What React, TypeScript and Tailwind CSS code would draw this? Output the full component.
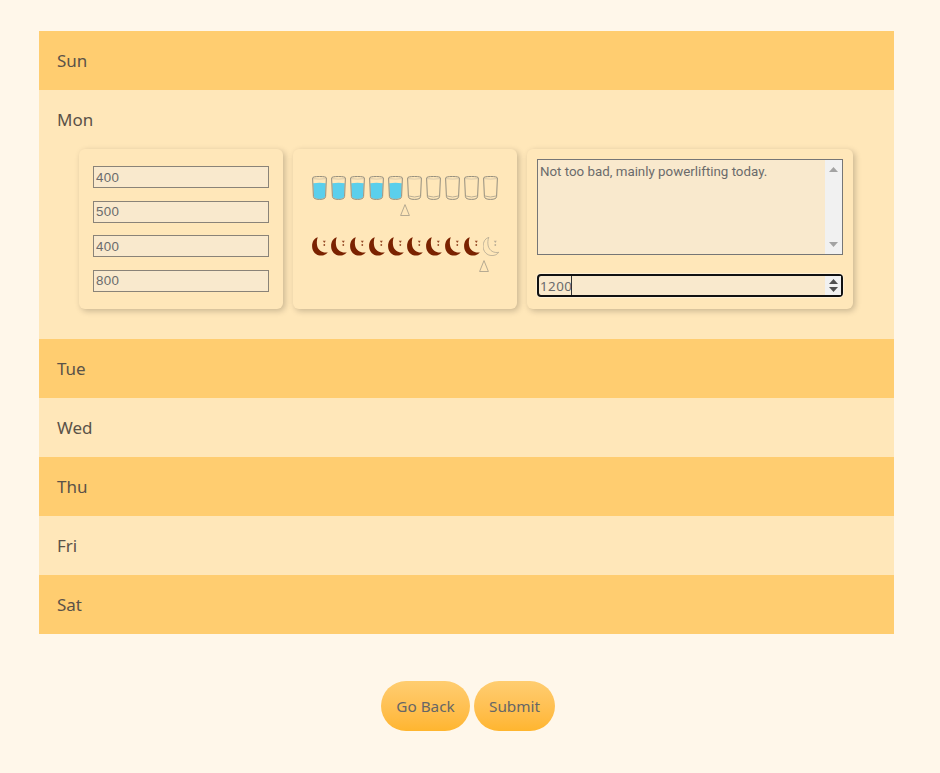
const FONT = "font-['Noto_Sans','Liberation_Sans',sans-serif]";

function Glass({ filled }: { filled: boolean }) {
  return (
    <svg width="15" height="24" viewBox="0 0 15 24" fill="none">
      {filled && (
        <path
          d="M1.2 7.2 Q7.5 6.2 13.8 7.2 L13.1 20.5 Q12.9 22.9 7.5 22.9 Q2.1 22.9 1.9 20.5 Z"
          fill="#5bcfec"
        />
      )}
      <path
        d="M0.6 2 Q0.6 0.5 7.5 0.5 Q14.4 0.5 14.4 2 L13.6 20.5 Q13.4 23.4 7.5 23.4 Q1.6 23.4 1.4 20.5 Z"
        stroke="#948e7e"
        strokeWidth="1"
      />
      <path d="M0.7 2.6 Q7.5 3.6 14.3 2.6" stroke="#b5ad9c" strokeWidth="0.5" />
      {!filled && (
        <path d="M1.8 20 Q7.5 22 13.2 20" stroke="#a89f8c" strokeWidth="0.8" />
      )}
    </svg>
  );
}

function Moon({ filled }: { filled: boolean }) {
  const star = filled ? '#7a2200' : '#a89f8c';
  return (
    <svg width="16" height="19" viewBox="0 0 16 19" fill="none">
      <path
        d="M5.8 0.3 C2 1.5 0.1 5 0.1 9.2 C0.1 14.6 4 18.6 9 18.6 C11.6 18.6 14.2 17.5 15.8 15.3 C11 16.3 6.4 13.8 5.2 9 C4.6 6 4.7 3 5.8 0.3 Z"
        fill={filled ? '#7a2200' : 'none'}
        stroke={filled ? 'none' : '#a89f8c'}
        strokeWidth="0.7"
      />
      <path d="M10.8 3.8 H13.8 L12.3 6 Z" fill={star} opacity="0.8" />
      <circle cx="12.3" cy="8" r="0.9" fill={star} opacity="0.8" />
    </svg>
  );
}

function Marker() {
  return (
    <svg width="10" height="12" viewBox="0 0 10 12" fill="none">
      <path d="M5 0.6 L9.4 11.5 H0.6 Z" stroke="#a39a88" strokeWidth="0.8" />
    </svg>
  );
}

function Row({ label, dark }: { label: string; dark: boolean }) {
  return (
    <div
      className={`h-[59px] flex items-center px-[18px] text-[17px] text-[#5a5248] ${
        dark ? 'bg-[#ffcd70]' : 'bg-[#ffe7b9]'
      }`}
    >
      {label}
    </div>
  );
}

function Field({ value }: { value: string }) {
  return (
    <input
      type="number"
      defaultValue={value}
      className="w-full h-[22px] px-[2px] bg-[#f9e9cd] border border-[#8a8378] text-[13.33px] text-[#6b6b6b] font-['Liberation_Sans',sans-serif] tracking-[0.4px] outline-none"
    />
  );
}

function ArrowUp({ color }: { color: string }) {
  return (
    <svg width="9" height="5" viewBox="0 0 9 5">
      <path d="M4.5 0 L9 5 H0 Z" fill={color} />
    </svg>
  );
}

function ArrowDown({ color }: { color: string }) {
  return (
    <svg width="9" height="5" viewBox="0 0 9 5">
      <path d="M0 0 H9 L4.5 5 Z" fill={color} />
    </svg>
  );
}

export default function App() {
  const glasses = [1, 1, 1, 1, 1, 0, 0, 0, 0, 0];
  const moons = [1, 1, 1, 1, 1, 1, 1, 1, 1, 0];

  return (
    <div className={`min-h-[773px] bg-[#fff7ea] pl-[39px] pr-[46px] pt-[31px] ${FONT}`}>
      <Row label="Sun" dark />

      <div className="bg-[#ffe7b9] pb-[30px]">
        <div className="h-[59px] flex items-center px-[18px] text-[17px] text-[#5a5248]">Mon</div>
        <div className="flex gap-[10px] pl-[40px]">
          <div className="w-[204px] h-[160px] rounded-md bg-[#ffe7b9] shadow-[2px_2px_6px_rgba(0,0,0,0.22)] px-[14px] pt-[17px] flex flex-col gap-[12.67px]">
            <Field value="400" />
            <Field value="500" />
            <Field value="400" />
            <Field value="800" />
          </div>

          <div className="w-[224px] h-[160px] rounded-md bg-[#ffe7b9] shadow-[2px_2px_6px_rgba(0,0,0,0.22)] pt-[27px] flex flex-col items-center">
            <div className="flex gap-[4px] h-[24px]">
              {glasses.map((g, i) => (
                <Glass key={i} filled={g === 1} />
              ))}
            </div>
            <div className="mt-[4px] h-[12px] flex">
              <Marker />
            </div>
            <div className="mt-[21px] pl-px flex gap-[3px] h-[19px]">
              {moons.map((m, i) => (
                <Moon key={i} filled={m === 1} />
              ))}
            </div>
            <div className="mt-[4px] h-[12px] w-full flex pl-[186px]">
              <Marker />
            </div>
          </div>

          <div className="w-[326px] h-[160px] rounded-md bg-[#ffe7b9] shadow-[2px_2px_6px_rgba(0,0,0,0.22)] px-[10px] pt-[10px] flex flex-col">
            <div className="relative h-[96px]">
              <textarea
                readOnly
                defaultValue="Not too bad, mainly powerlifting today."
                className="w-full h-[96px] block px-[2px] pt-[3px] bg-[#f9e9cd] border border-[#767676] font-['Roboto',sans-serif] text-[13.33px] leading-[17px] text-[#6b6b6b] resize-none outline-none"
              />
              <div className="absolute top-px right-px bottom-px w-[17px] bg-[#f1f1f1] flex flex-col items-center justify-between py-[7px]">
                <ArrowUp color="#a3a3a3" />
                <ArrowDown color="#a3a3a3" />
              </div>
            </div>
            <div className="relative mt-[19px] h-[23px]">
              <input
                type="number"
                defaultValue="1200"
                className="block w-full h-[23px] pl-px bg-[#f9e9cd] border-2 border-[#111111] rounded-[4px] shadow-[0_0_0_1px_#ffffff66] text-[13.33px] tracking-[0.5px] text-[#6b6b6b] outline-none caret-transparent [&::-webkit-inner-spin-button]:appearance-none"
              />
              <div className="absolute top-[2px] left-[34px] bottom-[2px] w-px bg-[#333333]" />
              <div className="absolute top-[2px] right-[2px] bottom-[2px] w-[16px] bg-[#f1f1f1] flex flex-col items-center justify-center gap-[3px]">
                <ArrowUp color="#505050" />
                <ArrowDown color="#505050" />
              </div>
            </div>
          </div>
        </div>
      </div>

      <Row label="Tue" dark />
      <Row label="Wed" dark={false} />
      <Row label="Thu" dark />
      <Row label="Fri" dark={false} />
      <Row label="Sat" dark />

      <div className="mt-[47px] pl-[3px] flex justify-center gap-[4px]">
        <button className="w-[89px] h-[50px] pt-px rounded-full bg-gradient-to-b from-[#ffcd70] to-[#ffb52e] text-[15.3px] text-[#666666]">
          Go Back
        </button>
        <button className="w-[81px] h-[50px] pt-px rounded-full bg-gradient-to-b from-[#ffcd70] to-[#ffb52e] text-[15.3px] text-[#666666]">
          Submit
        </button>
      </div>
    </div>
  );
}
